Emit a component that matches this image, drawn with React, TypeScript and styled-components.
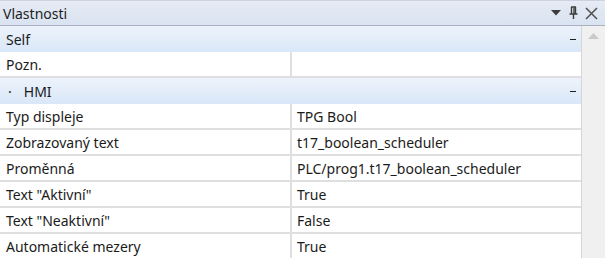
import styled, { createGlobalStyle } from "styled-components";

const Global = createGlobalStyle`
    html, body {
        margin: 0;
        padding: 0;
        background: #ffffff;
    }
    body {
        font-family: "Noto Sans", "Open Sans", sans-serif;
        font-size: 14px;
        color: #1b1b1b;
    }
`;

const Panel = styled.div`
    width: 605px;
    height: 258px;
    overflow: hidden;
    display: flex;
    flex-direction: column;
    background: #ffffff;
`;

const TitleBar = styled.div`
    height: 26px;
    flex: 0 0 26px;
    display: flex;
    align-items: center;
    justify-content: space-between;
    padding: 0 7px 0 3px;
    background: linear-gradient(#e6ebf4, #d9e3f1);
    border-top: 1px solid #cdd2e2;
    border-bottom: 1px solid #a9b1c2;
    box-sizing: border-box;
`;

const Title = styled.span`
    font-size: 14px;
    color: #1e1e1e;
`;

const Tools = styled.div`
    display: flex;
    align-items: center;
    gap: 7px;
`;

const Body = styled.div`
    flex: 1 1;
    display: flex;
    min-height: 0;
`;

const Grid = styled.div`
    flex: 1 1;
    display: flex;
    flex-direction: column;
    border-right: 1px solid #d6d6d6;
`;

const Scrollbar = styled.div`
    flex: 0 0 23px;
    background: #f0f0f0;
    display: flex;
    justify-content: center;
    padding-top: 7px;
    box-sizing: border-box;
`;

const Section = styled.div<{ $gap?: boolean }>`
    height: 26px;
    flex: 0 0 26px;
    display: flex;
    align-items: center;
    justify-content: space-between;
    padding: 0 5px 0 ${p => (p.$gap ? "8px" : "6px")};
    box-sizing: border-box;
    background: linear-gradient(#edf3fb, #d9e7f8);
`;

const SectionName = styled.span`
    display: flex;
    align-items: center;
    gap: 12px;
`;

const Minus = styled.span`
    width: 6px;
    height: 1.5px;
    background: #1e1e1e;
    margin-top: 1px;
`;

const Row = styled.div`
    height: 26px;
    flex: 0 0 26px;
    display: grid;
    grid-template-columns: 292px 1fr;
    border-bottom: 2px solid #dfdfdf;
    box-sizing: border-box;
`;

const Label = styled.div`
    display: flex;
    align-items: center;
    padding-left: 6px;
    border-right: 2px solid #dfdfdf;
    white-space: nowrap;
`;

const Value = styled.div`
    display: flex;
    align-items: center;
    padding-left: 5px;
    white-space: nowrap;
`;

const hmi: [string, string][] = [
    ["Typ displeje", "TPG Bool"],
    ["Zobrazovaný text", "t17_boolean_scheduler"],
    ["Proměnná", "PLC/prog1.t17_boolean_scheduler"],
    ["Text \"Aktivní\"", "True"],
    ["Text \"Neaktivní\"", "False"],
    ["Automatické mezery", "True"],
];

const App = () => (
    <Panel>
        <Global />
        <TitleBar>
            <Title>Vlastnosti</Title>
            <Tools>
                <svg width="10" height="6" viewBox="0 0 10 6">
                    <path d="M0 0 H10 L5 5.5 Z" fill="#3c3c3c" />
                </svg>
                <svg width="10" height="14" viewBox="0 0 10 14">
                    <path d="M3 1 H8 M3.5 1 V8 M7.5 1 V8 M1.5 8 H9.5 M5.5 8 V13" stroke="#3c3c3c" strokeWidth="1.4" fill="none" />
                    <path d="M6 1.5 V8" stroke="#3c3c3c" strokeWidth="1.4" />
                </svg>
                <svg width="13" height="13" viewBox="0 0 13 13">
                    <path d="M1 1 L12 12 M12 1 L1 12" stroke="#505050" strokeWidth="1.5" fill="none" />
                </svg>
            </Tools>
        </TitleBar>
        <Body>
            <Grid>
                <Section>
                    <span>Self</span>
                    <Minus />
                </Section>
                <Row>
                    <Label>Pozn.</Label>
                    <Value />
                </Row>
                <Section $gap>
                    <SectionName><span>·</span><span>HMI</span></SectionName>
                    <Minus />
                </Section>
                {hmi.map(([name, value]) => (
                    <Row key={name}>
                        <Label>{name}</Label>
                        <Value>{value}</Value>
                    </Row>
                ))}
            </Grid>
            <Scrollbar>
                <svg width="11" height="6" viewBox="0 0 11 6">
                    <path d="M0 6 L5.5 0 L11 6 Z" fill="#c9c9c9" />
                </svg>
            </Scrollbar>
        </Body>
    </Panel>
);

export default App;
